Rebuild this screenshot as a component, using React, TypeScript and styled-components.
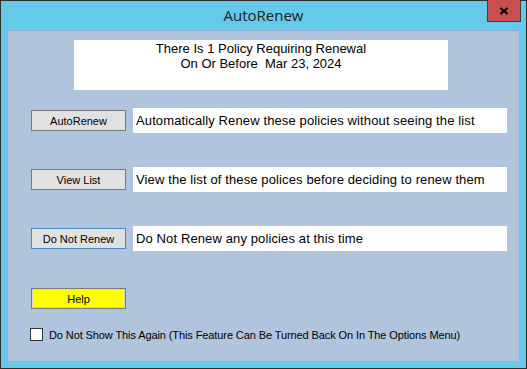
import React from "react";
import styled, { createGlobalStyle } from "styled-components";

const Global = createGlobalStyle`
  html, body { margin: 0; padding: 0; background: #ffffff; }
  * { box-sizing: border-box; }
`;

const Window = styled.div`
  width: 527px;
  height: 369px;
  border: 1px solid #2d2d2d;
  background: #65c9ea;
  display: flex;
  flex-direction: column;
  padding: 0 7px 7px 7px;
`;

const TitleBar = styled.div`
  height: 29px;
  position: relative;
  display: flex;
  align-items: center;
  justify-content: center;
  flex-shrink: 0;
`;

const Title = styled.div`
  font-family: "Open Sans", "Noto Sans", sans-serif;
  font-size: 15px;
  color: #1e1e1e;
  margin-top: -1px;
`;

const CloseButton = styled.div`
  position: absolute;
  top: -1px;
  right: -2px;
  width: 34px;
  height: 22px;
  background: #c75050;
  border: 1px solid #3d3d3d;
  border-top: none;
  display: flex;
  align-items: center;
  justify-content: center;
`;

const Client = styled.div`
  flex: 1;
  background: #b0c4de;
  border-top: 1px solid #8fb0d2;
  display: flex;
  flex-direction: column;
  padding: 9px 0 0 23px;
  font-family: "Liberation Sans", Arial, sans-serif;
`;

const Header = styled.div`
  margin-left: 43px;
  width: 374px;
  height: 50px;
  background: #ffffff;
  text-align: center;
  font-size: 13px;
  line-height: 15px;
  color: #000;
  padding-top: 1px;
`;

const Row = styled.div<{ $top: number }>`
  display: flex;
  align-items: center;
  gap: 7px;
  margin-top: ${(p) => p.$top}px;
`;

const Button = styled.div<{ $focus?: boolean; $yellow?: boolean }>`
  width: 95px;
  height: 21px;
  background: ${(p) => (p.$yellow ? "#ffff00" : "#e1e1e1")};
  border: 1px solid ${(p) => (p.$focus ? "#4a86c0" : "#7a7a7a")};
  box-shadow: ${(p) => (p.$yellow ? "inset 0 0 0 1px #d8d8c8" : "none")};
  font-family: "Liberation Sans", Arial, sans-serif;
  font-size: 11px;
  color: #000;
  display: flex;
  align-items: center;
  justify-content: center;
  flex-shrink: 0;
`;

const Desc = styled.div`
  width: 374px;
  height: 25px;
  background: #ffffff;
  font-size: 13px;
  letter-spacing: 0.12px;
  color: #000;
  display: flex;
  align-items: center;
  padding-left: 3px;
  white-space: nowrap;
`;

const CheckRow = styled.div`
  display: flex;
  align-items: center;
  gap: 6px;
  margin-top: 19px;
  margin-left: -1px;
`;

const Check = styled.div`
  width: 13px;
  height: 13px;
  background: #ffffff;
  border: 1px solid #333333;
  flex-shrink: 0;
`;

const CheckLabel = styled.div`
  font-size: 11px;
  color: #000;
  white-space: nowrap;
  letter-spacing: -0.1px;
`;

export default function App() {
  return (
    <>
      <Global />
      <Window>
        <TitleBar>
          <Title>AutoRenew</Title>
          <CloseButton>
            <svg width="10" height="8" viewBox="0 0 10 8">
              <path d="M1.5 1 L8.5 7 M8.5 1 L1.5 7" stroke="#000" strokeWidth="2.2" />
            </svg>
          </CloseButton>
        </TitleBar>
        <Client>
          <Header>
            There Is 1 Policy Requiring Renewal
            <br />
            On Or Before&nbsp; Mar 23, 2024
          </Header>
          <Row $top={18}>
            <Button>AutoRenew</Button>
            <Desc>Automatically Renew these policies without seeing the list</Desc>
          </Row>
          <Row $top={34}>
            <Button>View List</Button>
            <Desc>View the list of these polices before deciding to renew them</Desc>
          </Row>
          <Row $top={34}>
            <Button $focus>Do Not Renew</Button>
            <Desc>Do Not Renew any policies at this time</Desc>
          </Row>
          <Row $top={37}>
            <Button $yellow>Help</Button>
          </Row>
          <CheckRow>
            <Check />
            <CheckLabel>
              Do Not Show This Again (This Feature Can Be Turned Back On In The Options Menu)
            </CheckLabel>
          </CheckRow>
        </Client>
      </Window>
    </>
  );
}
